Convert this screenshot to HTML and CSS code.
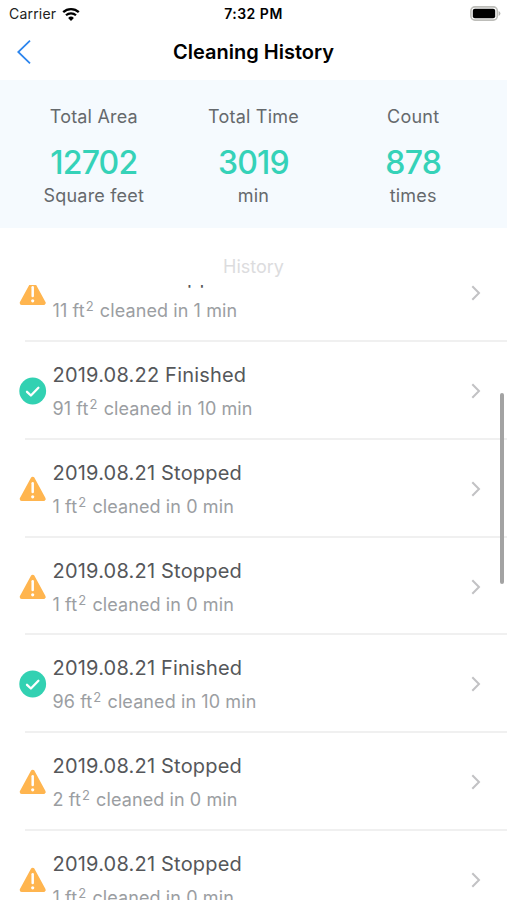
FILE: index.html
```html
<!DOCTYPE html>
<html lang="en">
<head>
  <meta charset="UTF-8">
  <meta name="viewport" content="width=device-width, initial-scale=1.0">
  <title>Cleaning History</title>
  <link rel="stylesheet" href="styles.css">
</head>
<body>
  <svg class="symbols" width="0" height="0">
    <symbol id="warning" viewBox="0 0 28 28">
      <path d="M13.7 3.8 L24.7 23.9 H2.7 Z" fill="#ffb54f" stroke="#ffb54f" stroke-width="4" stroke-linejoin="round"/>
      <path d="M13.7 8.3 V17" stroke="#fff" stroke-width="2.5" stroke-linecap="round"/>
      <circle cx="13.7" cy="21.8" r="1.6" fill="#fff"/>
    </symbol>
    <symbol id="done" viewBox="0 0 28 28">
      <circle cx="13.7" cy="14" r="13.4" fill="#32d1b2"/>
      <path d="M8 14.8 L11.9 18.5 L19.4 10.8" fill="none" stroke="#fff" stroke-width="2.3" stroke-linecap="round" stroke-linejoin="round"/>
    </symbol>
    <symbol id="arrow" viewBox="0 0 10 16">
      <path d="M1.3 1.2 L8 8 L1.3 14.8" fill="none" stroke="#c2c2c4" stroke-width="2"/>
    </symbol>
  </svg>

  <div class="statusbar">
    <div class="carrier">
      <span>Carrier</span>
      <svg class="wifi" viewBox="0 0 18 14">
        <path d="M1.2 5.2 A11.2 11.2 0 0 1 16.8 5.2" fill="none" stroke="#000" stroke-width="2.3"/>
        <path d="M4 8.3 A7.2 7.2 0 0 1 14 8.3" fill="none" stroke="#000" stroke-width="2.2"/>
        <path d="M9 14 L6.1 11 A4.2 4.2 0 0 1 11.9 11 Z"/>
      </svg>
    </div>
    <div class="clock">7:32 PM</div>
    <svg class="battery" viewBox="0 0 31 15">
      <rect x="0.9" y="0.9" width="26.4" height="13.2" rx="4" fill="#fff" stroke="#bdbdb9" stroke-width="1.6"/>
      <rect x="2.8" y="2.8" width="22.4" height="9.4" rx="2"/>
      <path d="M28.6 5 Q30.4 5.8 30.4 7.5 Q30.4 9.2 28.6 10 Z" fill="#b5b5b1"/>
    </svg>
  </div>

  <div class="navbar">
    <svg class="back" viewBox="0 0 14 24"><path d="M13 0.7 L1.2 12 L13 23.3" fill="none" stroke="#2c85ee" stroke-width="1.8"/></svg>
    <h1>Cleaning History</h1>
  </div>

  <div class="totals">
    <div class="total"><div class="label">Total Area</div><div class="number">12702</div><div class="unit">Square feet</div></div>
    <div class="total"><div class="label">Total Time</div><div class="number">3019</div><div class="unit">min</div></div>
    <div class="total"><div class="label">Count</div><div class="number">878</div><div class="unit">times</div></div>
  </div>

  <h2>History</h2>

  <div class="history">
    <div class="row">
      <svg class="icon"><use href="#warning"/></svg>
      <div class="text"><div class="title">2019.09.11 Stopped</div><div class="detail">11 ft<sup>2</sup> cleaned in 1 min</div></div>
      <svg class="arrow"><use href="#arrow"/></svg>
    </div>
    <div class="row">
      <svg class="icon"><use href="#done"/></svg>
      <div class="text"><div class="title">2019.08.22 Finished</div><div class="detail">91 ft<sup>2</sup> cleaned in 10 min</div></div>
      <svg class="arrow"><use href="#arrow"/></svg>
    </div>
    <div class="row">
      <svg class="icon"><use href="#warning"/></svg>
      <div class="text"><div class="title">2019.08.21 Stopped</div><div class="detail">1 ft<sup>2</sup> cleaned in 0 min</div></div>
      <svg class="arrow"><use href="#arrow"/></svg>
    </div>
    <div class="row">
      <svg class="icon"><use href="#warning"/></svg>
      <div class="text"><div class="title">2019.08.21 Stopped</div><div class="detail">1 ft<sup>2</sup> cleaned in 0 min</div></div>
      <svg class="arrow"><use href="#arrow"/></svg>
    </div>
    <div class="row">
      <svg class="icon"><use href="#done"/></svg>
      <div class="text"><div class="title">2019.08.21 Finished</div><div class="detail">96 ft<sup>2</sup> cleaned in 10 min</div></div>
      <svg class="arrow"><use href="#arrow"/></svg>
    </div>
    <div class="row">
      <svg class="icon"><use href="#warning"/></svg>
      <div class="text"><div class="title">2019.08.21 Stopped</div><div class="detail">2 ft<sup>2</sup> cleaned in 0 min</div></div>
      <svg class="arrow"><use href="#arrow"/></svg>
    </div>
    <div class="row">
      <svg class="icon"><use href="#warning"/></svg>
      <div class="text"><div class="title">2019.08.21 Stopped</div><div class="detail">1 ft<sup>2</sup> cleaned in 0 min</div></div>
      <svg class="arrow"><use href="#arrow"/></svg>
    </div>
    <div class="scrollbar"></div>
  </div>
</body>
</html>
```
FILE: styles.css
```css
* {
  box-sizing: border-box;
}

body {
  margin: 0;
  height: 900px;
  overflow: hidden;
  display: flex;
  flex-direction: column;
  background-color: #fff;
  font-family: Inter, "Liberation Sans", sans-serif;
}

.symbols {
  position: absolute;
}

.statusbar {
  display: grid;
  grid-template-columns: 1fr auto 1fr;
  align-items: center;
  height: 27px;
  padding: 0 6px 0 9px;
  font-size: 14px;
}

.carrier {
  display: flex;
  align-items: center;
  gap: 6px;
  letter-spacing: 0.2px;
  color: #222;
}

.wifi {
  width: 18px;
  height: 14px;
}

.clock {
  margin-right: 3px;
  font-weight: 600;
  letter-spacing: 0.5px;
}

.battery {
  width: 31px;
  height: 15px;
  justify-self: end;
}

.navbar {
  display: grid;
  grid-template-columns: 1fr auto 1fr;
  align-items: center;
  height: 53px;
  padding: 0 17px 3px;
}

.back {
  width: 14px;
  height: 24px;
}

h1 {
  margin: 0;
  font-size: 20px;
  font-weight: 600;
}

.totals {
  display: grid;
  grid-template-columns: repeat(3, 1fr);
  height: 148px;
  padding: 24px 14px 0;
  background-color: #f5fafe;
  color: #65696c;
  font-size: 18px;
  text-align: center;
}

.label,
.unit {
  line-height: 26px;
  letter-spacing: 0.2px;
}

.number {
  margin-top: 13px;
  font-size: 32px;
  font-weight: 500;
  line-height: 40px;
  letter-spacing: -0.8px;
  color: #35d2b8;
}

h2 {
  margin: 0;
  height: 57px;
  padding-top: 26px;
  font-size: 18px;
  font-weight: 400;
  line-height: 26px;
  text-align: center;
  color: #dcdcde;
}

.history {
  position: relative;
  flex: 1;
  min-height: 0;
  overflow: hidden;
}

.row {
  display: flex;
  align-items: center;
  height: 97.75px;
  margin-left: 25px;
  padding: 2px 26px 0 0;
  border-bottom: 2px solid #f0f0f0;
}

/* list is scrolled part way into the first entry */
.row:first-child {
  margin-top: -40.6px;
}

.icon {
  width: 28px;
  height: 28px;
  margin-left: -6px;
}

.text {
  flex: 1;
  margin-left: 5.5px;
  padding-top: 2px;
}

.title {
  font-size: 20px;
  line-height: 30px;
  letter-spacing: 0.2px;
  color: #55575a;
}

.detail {
  margin-top: 4px;
  font-size: 18px;
  line-height: 30px;
  letter-spacing: 0.1px;
  color: #9b9ea2;
}

sup {
  margin: 0 1px;
  font-size: 13px;
  line-height: 0;
  vertical-align: 6px;
}

.arrow {
  width: 10px;
  height: 16px;
}

.scrollbar {
  position: absolute;
  top: 108px;
  right: 3px;
  width: 4px;
  height: 191px;
  border-radius: 2px;
  background-color: #a3a3a3;
}
```
